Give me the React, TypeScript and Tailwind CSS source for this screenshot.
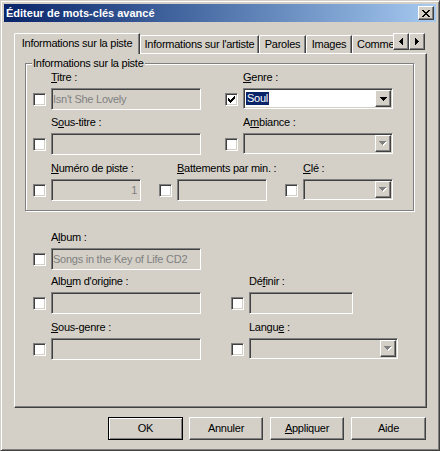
import type { ReactNode } from "react";

// classic 3D edges
const sunken =
  "border border-t-[#808080] border-l-[#808080] border-r-white border-b-white shadow-[inset_1px_1px_0_#404040,inset_-1px_-1px_0_#d4d0c8]";
const raised =
  "border border-t-white border-l-white border-r-[#404040] border-b-[#404040] shadow-[inset_-1px_-1px_0_#808080]";

type R = number[];

function Pixels({ w, h, rects, fill, emboss }: { w: number; h: number; rects: R[]; fill: string; emboss?: boolean }) {
  return (
    <svg width={emboss ? w + 1 : w} height={emboss ? h + 1 : h} shapeRendering="crispEdges">
      {emboss && rects.map(([x, y, rw, rh = 1], i) => <rect key={"e" + i} x={x + 1} y={y + 1} width={rw} height={rh} fill="#fff" />)}
      {rects.map(([x, y, rw, rh = 1], i) => <rect key={i} x={x} y={y} width={rw} height={rh} fill={fill} />)}
    </svg>
  );
}

const arrowDown: R[] = [[0, 0, 7], [1, 1, 5], [2, 2, 3], [3, 3, 1]];
const arrowLeft: R[] = [[0, 3, 1, 1], [1, 2, 1, 3], [2, 1, 1, 5], [3, 0, 1, 7]];
const arrowRight: R[] = [[0, 0, 1, 7], [1, 1, 1, 5], [2, 2, 1, 3], [3, 3, 1, 1]];
const tick: R[] = [[6, 0, 1], [5, 1, 2], [0, 2, 1], [4, 2, 3], [0, 3, 2], [3, 3, 3], [0, 4, 5], [1, 5, 3], [2, 6, 1]];
const cross: R[] = [[0, 0, 2], [6, 0, 2], [1, 1, 2], [5, 1, 2], [2, 2, 4], [3, 3, 2], [2, 4, 4], [1, 5, 2], [5, 5, 2], [0, 6, 2], [6, 6, 2]];

function Label({ text, u }: { text: string; u?: number }) {
  if (u === undefined) return <>{text}</>;
  return (
    <>
      {text.slice(0, u)}
      <span className="underline underline-offset-[1px]">{text[u]}</span>
      {text.slice(u + 1)}
    </>
  );
}

function Check({ checked }: { checked?: boolean }) {
  return (
    <div className={`mt-[5px] w-[13px] h-[13px] shrink-0 bg-white ${sunken} flex items-center justify-center`}>
      {checked && <Pixels w={7} h={7} rects={tick} fill="#000" />}
    </div>
  );
}

function Edit({ w, value, right }: { w: string; value?: string; right?: boolean }) {
  return (
    <div
      className={`${w} h-[22px] ${sunken} bg-[#d4d0c8] text-[#808080] flex items-center whitespace-nowrap overflow-hidden ${
        right ? "justify-end pr-[3px]" : "pl-[1px]"
      }`}
    >
      {value}
    </div>
  );
}

function Combo({ w, value, enabled }: { w: string; value?: string; enabled?: boolean }) {
  return (
    <div className={`${w} h-[21px] ${sunken} ${enabled ? "bg-white" : "bg-[#d4d0c8]"} flex p-[1px]`}>
      <div className="flex-1 flex items-center pl-[1px]">
        {value && <span className="bg-[#0a246a] text-white px-[1px] leading-[13px]">{value}</span>}
      </div>
      <div className={`w-[16px] ${raised} bg-[#d4d0c8] flex items-center justify-center`}>
        {enabled ? (
          <Pixels w={7} h={4} rects={arrowDown} fill="#000" />
        ) : (
          <Pixels w={7} h={4} rects={arrowDown} fill="#808080" emboss />
        )}
      </div>
    </div>
  );
}

function Field({ label, u, w, checked, children }: { label: string; u?: number; w: string; checked?: boolean; children: ReactNode }) {
  return (
    <div className={`flex flex-col ${w}`}>
      <div className="h-[13px] pl-[18px] whitespace-nowrap">
        <Label text={label} u={u} />
      </div>
      <div className="mt-[4px] flex items-start gap-[5px]">
        <Check checked={checked} />
        {children}
      </div>
    </div>
  );
}

function Tab({ children, w, selected }: { children: ReactNode; w: string; selected?: boolean }) {
  if (selected)
    return (
      <div
        className={`relative z-10 ${w} h-[21px] -mb-px bg-[#d4d0c8] border-t border-l border-t-white border-l-white border-r border-r-[#404040] shadow-[inset_-1px_0_0_#808080] rounded-tl-[2px] flex items-center justify-center pb-[2px] whitespace-nowrap`}
      >
        {children}
      </div>
    );
  return (
    <div
      className={`${w} h-[18px] border-t border-l border-t-white border-l-white border-r border-r-[#404040] shadow-[inset_-1px_0_0_#808080] rounded-tl-[2px] flex items-center justify-center whitespace-nowrap`}
    >
      {children}
    </div>
  );
}

function Btn({ children, w, def }: { children: ReactNode; w: string; def?: boolean }) {
  return (
    <button
      type="button"
      className={`${w} h-[23px] flex items-center justify-center ${
        def ? "border border-black shadow-[inset_1px_1px_0_#fff,inset_-1px_-1px_0_#808080]" : raised
      }`}
    >
      {children}
    </button>
  );
}

export default function App() {
  return (
    <div className="w-[440px] h-[451px] bg-[#d4d0c8] text-black text-[11px] leading-[13px] tracking-[-0.25px] font-['Liberation_Sans',Arial,sans-serif] border border-t-[#d4d0c8] border-l-[#d4d0c8] border-r-[#404040] border-b-[#404040] shadow-[inset_1px_1px_0_#fff,inset_-1px_-1px_0_#808080] p-[3px] flex flex-col select-none">
      {/* title bar */}
      <div className="h-[18px] shrink-0 bg-linear-to-r from-[#0a246a] to-[#a6caf0] flex items-center pl-[2px] pr-[2px]">
        <span className="flex-1 text-white font-bold tracking-normal whitespace-nowrap">Éditeur de mots-clés avancé</span>
        <div className={`w-[16px] h-[14px] bg-[#d4d0c8] ${raised} flex items-center justify-center pr-[1px]`}>
          <Pixels w={8} h={7} rects={cross} fill="#000" />
        </div>
      </div>

      <div className="flex flex-col pt-[11px] pl-[10px] pr-[9px]">
        {/* tabs */}
        <div className="flex items-end h-[20px]">
          <Tab w="w-[126px]" selected>
            Informations sur la piste
          </Tab>
          <Tab w="w-[119px]">Informations sur l'artiste</Tab>
          <Tab w="w-[47px]">Paroles</Tab>
          <Tab w="w-[46px]">Images</Tab>
          <div className="w-[41px] h-[18px] border-t border-l border-t-white border-l-white rounded-tl-[2px] overflow-hidden whitespace-nowrap flex items-center pl-[4px]">
            Commentaires
          </div>
          <div className="self-start flex">
            <div className={`w-[16px] h-[17px] ${raised} flex items-center justify-center`}>
              <Pixels w={4} h={7} rects={arrowLeft} fill="#000" />
            </div>
            <div className={`w-[16px] h-[17px] ${raised} flex items-center justify-center`}>
              <Pixels w={4} h={7} rects={arrowRight} fill="#000" />
            </div>
          </div>
        </div>

        {/* tab page */}
        <div className="h-[355px] border border-t-white border-l-white border-r-[#404040] border-b-[#404040] shadow-[inset_-1px_-1px_0_#808080] pl-[10px] pt-[9px] flex flex-col">
          <div className="w-[389px] h-[148px] border border-[#808080] shadow-[inset_1px_1px_0_#fff,1px_1px_0_#fff] flex flex-col">
            <span className="-mt-[7px] ml-[6px] self-start px-[1px] h-[13px] bg-[#d4d0c8] whitespace-nowrap">
              Informations sur la piste
            </span>
            <div className="mt-[1px] pl-[7px] flex flex-col">
              <div className="flex">
                <Field label="Titre :" u={0} w="w-[192px]">
                  <Edit w="w-[150px]" value="Isn't She Lovely" />
                </Field>
                <Field label="Genre :" u={0} w="w-[170px]" checked>
                  <Combo w="w-[150px]" value="Soul" enabled />
                </Field>
              </div>
              <div className="flex mt-[6px]">
                <Field label="Sous-titre :" u={1} w="w-[192px]">
                  <Edit w="w-[150px]" />
                </Field>
                <Field label="Ambiance :" u={1} w="w-[170px]">
                  <Combo w="w-[150px]" />
                </Field>
              </div>
              <div className="flex mt-[7px]">
                <Field label="Numéro de piste :" u={0} w="w-[126px]">
                  <Edit w="w-[90px]" value="1" right />
                </Field>
                <Field label="Battements par min. :" u={0} w="w-[126px]">
                  <Edit w="w-[90px]" />
                </Field>
                <Field label="Clé :" u={0} w="w-[126px]">
                  <Combo w="w-[90px]" />
                </Field>
              </div>
            </div>
          </div>

          <div className="mt-[20px] pl-[8px] flex flex-col">
            <Field label="Album :" u={1} w="w-[198px]">
              <Edit w="w-[150px]" value="Songs in the Key of Life CD2" />
            </Field>
            <div className="flex mt-[5px]">
              <Field label="Album d'origine :" u={3} w="w-[198px]">
                <Edit w="w-[150px]" />
              </Field>
              <Field label="Définir :" u={2} w="w-[170px]">
                <Edit w="w-[104px]" />
              </Field>
            </div>
            <div className="flex mt-[7px]">
              <Field label="Sous-genre :" u={0} w="w-[198px]">
                <Edit w="w-[150px]" />
              </Field>
              <Field label="Langue :" u={5} w="w-[170px]">
                <Combo w="w-[149px]" />
              </Field>
            </div>
          </div>
        </div>

        {/* buttons */}
        <div className="mt-[9px] mr-[1px] flex justify-end">
          <Btn w="w-[75px]" def>
            OK
          </Btn>
          <div className="w-[6px]" />
          <Btn w="w-[74px]">Annuler</Btn>
          <div className="w-[7px]" />
          <Btn w="w-[74px]">
            <Label text="Appliquer" u={0} />
          </Btn>
          <div className="w-[7px]" />
          <Btn w="w-[75px]">Aide</Btn>
        </div>
      </div>
    </div>
  );
}
